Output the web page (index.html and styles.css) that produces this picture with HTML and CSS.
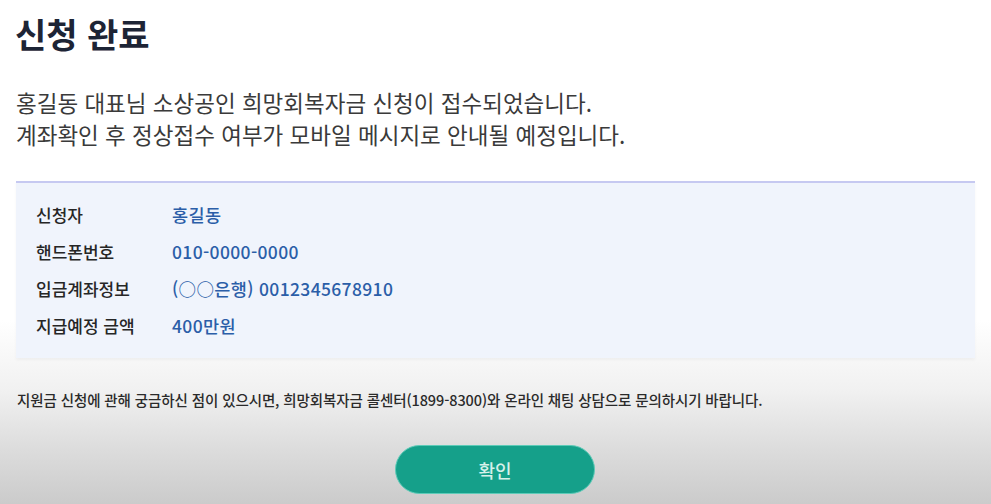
FILE: index.html
```html
<!DOCTYPE html>
<html lang="ko">
<head>
<meta charset="utf-8">
<title>신청 완료</title>
<link rel="stylesheet" href="styles.css">
</head>
<body>
<main class="page">
  <h1 class="title">신청 완료</h1>
  <p class="lead">홍길동 대표님 소상공인 희망회복자금 신청이 접수되었습니다.<br>계좌확인 후 정상접수 여부가 모바일 메시지로 안내될 예정입니다.</p>
  <section class="info">
    <dl class="info-list">
      <div class="row"><dt>신청자</dt><dd>홍길동</dd></div>
      <div class="row"><dt>핸드폰번호</dt><dd>010-0000-0000</dd></div>
      <div class="row"><dt>입금계좌정보</dt><dd>(○○은행) 0012345678910</dd></div>
      <div class="row"><dt>지급예정 금액</dt><dd>400만원</dd></div>
    </dl>
  </section>
  <p class="notice">지원금 신청에 관해 궁금하신 점이 있으시면, 희망회복자금 콜센터(1899-8300)와 온라인 채팅 상담으로 문의하시기 바랍니다.</p>
  <div class="actions">
    <button class="btn" type="button">확인</button>
  </div>
</main>
</body>
</html>
```
FILE: styles.css
```css
* { box-sizing: border-box; }
html, body { margin: 0; padding: 0; }
body {
  width: 991px;
  height: 504px;
  overflow: hidden;
  font-family: "Noto Sans CJK KR", "Noto Sans", sans-serif;
  background: linear-gradient(to bottom, #ffffff 0px, #ffffff 320px, #f1f1f1 390px, #dcdcdc 450px, #cbcbcb 504px);
}
.page {
  padding: 13px 16px 0 15px;
}
.title {
  margin: 0;
  font-size: 34px;
  line-height: 41px;
  font-weight: 700;
  color: #1d2435;
  letter-spacing: 0;
}
.lead {
  margin: 32px 0 0 1px;
  font-size: 22.5px;
  line-height: 32px;
  color: #3a3a3a;
  font-weight: 400;
}
.info {
  margin-top: 31px;
  margin-left: 1px;
  width: 959px;
  background: #f0f4fc;
  border-top: 2px solid #c6c9f1;
  padding: 13px 20px 14px 20px;
  box-shadow: 0 2px 3px rgba(0,0,0,0.04);
}
.info-list { margin: 0; }
.row {
  display: flex;
  align-items: baseline;
  line-height: 37px;
}
.row dt {
  width: 136px;
  color: #262626;
  font-size: 17px;
  font-weight: 500;
}
.row dd {
  margin: 0;
  color: #2b5ea8;
  font-size: 17.5px;
  font-weight: 500;
  letter-spacing: 0.35px;
}
.notice {
  margin: 32px 0 0 2px;
  font-size: 14.5px;
  line-height: 20px;
  color: #2a2a2a;
  font-weight: 500;
  letter-spacing: -0.1px;
}
.actions {
  display: flex;
  justify-content: center;
  margin-top: 35px;
}
.btn {
  width: 200px;
  height: 49px;
  border: 1px solid #5dcbb8;
  border-radius: 25px;
  background: #15a08a;
  color: #d7f1ea;
  font-family: inherit;
  font-size: 18px;
  font-weight: 500;
}
```
